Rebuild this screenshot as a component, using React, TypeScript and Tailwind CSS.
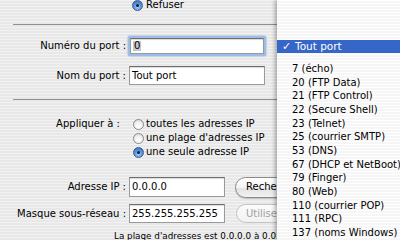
import React from "react";

function Radio({ on }: { on?: boolean }) {
  return on ? (
    <div className="w-[11px] h-[11px] rounded-full border border-[#3d5d93] bg-[radial-gradient(circle_at_50%_70%,#a9cdf5_0%,#5b97e0_45%,#2f63bd_100%)] flex items-center justify-center shrink-0">
      <div className="w-[3px] h-[3px] rounded-full bg-[#1a1a2a]" />
    </div>
  ) : (
    <div className="w-[11px] h-[11px] rounded-full border border-[#8a8a8a] bg-[radial-gradient(circle_at_50%_75%,#ffffff_0%,#f2f2f2_50%,#cfcfcf_100%)] shrink-0" />
  );
}

function Field({ w, h, value, focus, sel }: { w: number; h: number; value: string; focus?: boolean; sel?: boolean }) {
  return (
    <div
      className={
        focus
          ? "rounded-[2px] p-[2px] bg-[#9dbde6] shadow-[0_0_2px_#6f9bd6]"
          : ""
      }
    >
      <div
        style={{ width: w, height: h }}
        className="bg-white border border-[#9a9a9a] border-t-[#6e6e6e] shadow-[inset_0_1px_1px_rgba(0,0,0,0.15)] flex items-center pl-[2px]"
      >
        {sel ? <span className="bg-[#c8c8c8] px-px">{value}</span> : <span>{value}</span>}
      </div>
    </div>
  );
}

function Label({ children }: { children: React.ReactNode }) {
  return <div className="w-[129px] pr-[3px] text-right shrink-0">{children}</div>;
}

const items = [
  "7 (écho)",
  "20 (FTP Data)",
  "21 (FTP Control)",
  "22 (Secure Shell)",
  "23 (Telnet)",
  "25 (courrier SMTP)",
  "53 (DNS)",
  "67 (DHCP et NetBoot)",
  "79 (Finger)",
  "80 (Web)",
  "110 (courrier POP)",
  "111 (RPC)",
  "137 (noms Windows)",
];

export default function App() {
  return (
    <div className="relative w-[400px] h-[240px] overflow-hidden font-['DejaVu_Sans',sans-serif] text-[10px] leading-none text-black bg-[repeating-linear-gradient(180deg,#f2f2f2_0px,#f2f2f2_1.5px,#e8e8e8_1.5px,#e8e8e8_3px)]">
      <div className="flex flex-col">
        <div className="flex items-center h-[12px] mt-[-1px] pl-[132px] gap-[3px]">
          <Radio on />
          <span>Refuser</span>
        </div>
        <div className="h-px bg-[#8f8f8f] ml-[13px] mt-[13px]" />
        <div className="flex items-center h-[20px] mt-[11px]">
          <Label>Numéro du port :</Label>
          <div className="-ml-[1px]">
            <Field w={134} h={16} value="0" focus sel />
          </div>
        </div>
        <div className="flex items-center h-[19px] mt-[10px]">
          <Label>Nom du port :</Label>
          <Field w={136} h={19} value="Tout port" />
        </div>
        <div className="h-px bg-[#8f8f8f] ml-[13px] mt-[14px]" />
        <div className="flex mt-[17px]">
          <div className="w-[122px] text-right pr-[2px] h-[14px] flex items-center justify-end shrink-0">Appliquer à :</div>
          <div className="flex flex-col pl-[11px]">
            <div className="flex items-center h-[14px] gap-[2px]">
              <Radio />
              <span>toutes les adresses IP</span>
            </div>
            <div className="flex items-center h-[14px] gap-[2px]">
              <Radio />
              <span>une plage d'adresses IP</span>
            </div>
            <div className="flex items-center h-[14px] gap-[2px]">
              <Radio on />
              <span>une seule adresse IP</span>
            </div>
          </div>
        </div>
        <div className="flex items-center h-[20px] mt-[18px]">
          <Label>Adresse IP :</Label>
          <Field w={96} h={20} value="0.0.0.0" />
          <div className="ml-[10px] h-[21px] w-[90px] rounded-full border border-[#8a8a8a] bg-[linear-gradient(180deg,#ffffff_0%,#f4f4f4_50%,#e2e2e2_51%,#f2f2f2_100%)] shadow-[0_1px_1px_rgba(0,0,0,0.2)] flex items-center pl-[10px]">
            Rechercher
          </div>
        </div>
        <div className="flex items-center h-[19px] mt-[7px]">
          <Label>Masque sous-réseau :</Label>
          <Field w={96} h={19} value="255.255.255.255" />
          <div className="ml-[11px] h-[19px] w-[80px] rounded-full border border-[#c4c4c4] bg-[linear-gradient(180deg,#fbfbfb_0%,#f2f2f2_100%)] text-[#a0a0a0] flex items-center pl-[9px]">
            Utiliser
          </div>
        </div>
        <div className="mt-[7px] pl-[114px] h-[12px] flex items-center text-[8.8px] whitespace-nowrap">
          La plage d'adresses est 0.0.0.0 à 0.0.0.0
        </div>
      </div>

      <div className="absolute left-[277px] top-0 w-[123px] h-[240px] bg-[repeating-linear-gradient(180deg,#ffffff_0px,#ffffff_1.5px,#f6f6f6_1.5px,#f6f6f6_3px)] shadow-[-2px_0_4px_rgba(0,0,0,0.3)] flex flex-col pt-[40px]">
        <div className="h-[14px] bg-[#3566c8] text-white flex items-center whitespace-nowrap">
          <span className="w-[18px] pl-[5px] text-[11px] font-bold">✓</span>
          <span className="text-[10.5px]">Tout port</span>
        </div>
        <div className="h-[10px]" />
        {items.map((t) => (
          <div key={t} className="h-[13.7px] shrink-0 flex items-center pl-[15px] whitespace-nowrap">
            {t}
          </div>
        ))}
      </div>
    </div>
  );
}
